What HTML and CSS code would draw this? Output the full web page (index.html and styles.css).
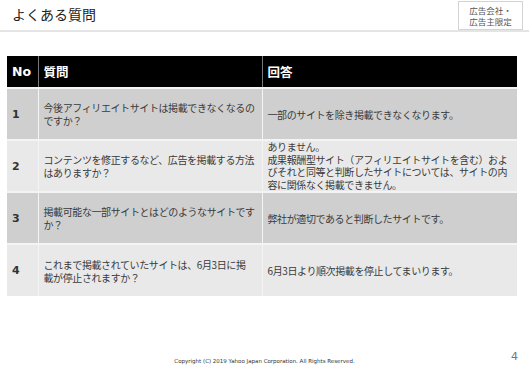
FILE: index.html
```html
<!DOCTYPE html>
<html lang="ja">
<head>
<meta charset="utf-8">
<link rel="stylesheet" href="styles.css">
</head>
<body>
<div class="page">
  <header class="top">
    <h1 class="title">よくある質問</h1>
    <div class="badge">広告会社・<br>広告主限定</div>
  </header>
  <main class="content">
    <table class="faq">
      <colgroup>
        <col class="c-no"><col class="c-q"><col class="c-a">
      </colgroup>
      <thead>
        <tr><th>No</th><th>質問</th><th>回答</th></tr>
      </thead>
      <tbody>
        <tr class="dark">
          <td class="no">1</td>
          <td>今後アフィリエイトサイトは掲載できなくなるのですか？</td>
          <td>一部のサイトを除き掲載できなくなります。</td>
        </tr>
        <tr class="light">
          <td class="no">2</td>
          <td>コンテンツを修正するなど、広告を掲載する方法はありますか？</td>
          <td class="tight">ありません。<br>成果報酬型サイト（アフィリエイトサイトを含む）およびそれと同等と判断したサイトについては、サイトの内容に関係なく掲載できません。</td>
        </tr>
        <tr class="dark">
          <td class="no">3</td>
          <td>掲載可能な一部サイトとはどのようなサイトですか？</td>
          <td>弊社が適切であると判断したサイトです。</td>
        </tr>
        <tr class="light">
          <td class="no">4</td>
          <td>これまで掲載されていたサイトは、6月3日に掲<br>載が停止されますか？</td>
          <td>6月3日より順次掲載を停止してまいります。</td>
        </tr>
      </tbody>
    </table>
  </main>
  <footer class="foot">
    <span class="copy">Copyright (C) 2019 Yahoo Japan Corporation. All Rights Reserved.</span>
    <span class="pnum">4</span>
  </footer>
</div>
</body>
</html>
```

FILE: styles.css
```css
html, body {
  margin: 0;
  padding: 0;
  background: #fff;
}
body {
  font-family: "DejaVu Sans", "Noto Sans CJK JP", sans-serif;
  color: #333;
}
.page {
  width: 529px;
  height: 367px;
  display: flex;
  flex-direction: column;
}
.top {
  height: 32px;
  border-bottom: 2px solid #e4e4e4;
  display: flex;
  align-items: flex-start;
  justify-content: space-between;
  box-sizing: border-box;
}
.title {
  margin: 6px 0 0 12px;
  font-family: "Noto Sans CJK JP", sans-serif;
  font-weight: normal;
  font-size: 14px;
  line-height: 16px;
  color: #222;
}
.badge {
  margin: 1px 6px 0 0;
  width: 65px;
  height: 29px;
  box-sizing: border-box;
  border: 1px solid #d4d4d4;
  font-family: "Noto Sans CJK JP", sans-serif;
  font-size: 8.5px;
  line-height: 11px;
  color: #555;
  text-align: center;
  padding-top: 3px;
}
.content {
  padding: 24px 0 0 7px;
}
.faq {
  width: 510px;
  border-collapse: collapse;
  table-layout: fixed;
  font-size: 10px;
}
.c-no { width: 31px; }
.c-q { width: 224px; }
.c-a { width: 255px; }
.faq th {
  background: #000;
  color: #fff;
  font-weight: bold;
  font-size: 12.5px;
  text-align: left;
  height: 32px;
  padding: 0 5px;
  border-left: 1px solid #777;
  box-sizing: border-box;
}
.faq th:first-child { border-left: none; }
.faq td {
  height: 52px;
  padding: 0 3px 0 5px;
  line-height: 13px;
  letter-spacing: -0.4px;
  vertical-align: middle;
  color: #3a3a3a;
  border-top: 2px solid #f4f4f4;
  border-left: 1px solid #f4f4f4;
  box-sizing: border-box;
  font-family: "Noto Sans CJK JP", sans-serif;
}
.faq td.no {
  border-left: none;
  font-family: "DejaVu Sans", sans-serif;
  font-size: 11px;
  font-weight: bold;
  letter-spacing: 0;
  color: #333;
  padding-left: 5px;
}
.faq tr.dark td { background: #cfcfcf; }
.faq tr.light td { background: #e9e9e9; }
.faq td.tight { line-height: 12.5px; padding-top: 0; padding-bottom: 0; }
.foot {
  margin-top: auto;
  height: 18px;
  display: flex;
  align-items: flex-end;
  justify-content: center;
  position: relative;
  padding-bottom: 2px;
}
.copy {
  font-family: "DejaVu Sans", sans-serif;
  font-size: 5.5px;
  color: #333;
  line-height: 8px;
}
.pnum {
  position: absolute;
  right: 11px;
  bottom: 4px;
  font-family: "DejaVu Sans", sans-serif;
  font-size: 11px;
  color: #777;
}
```
